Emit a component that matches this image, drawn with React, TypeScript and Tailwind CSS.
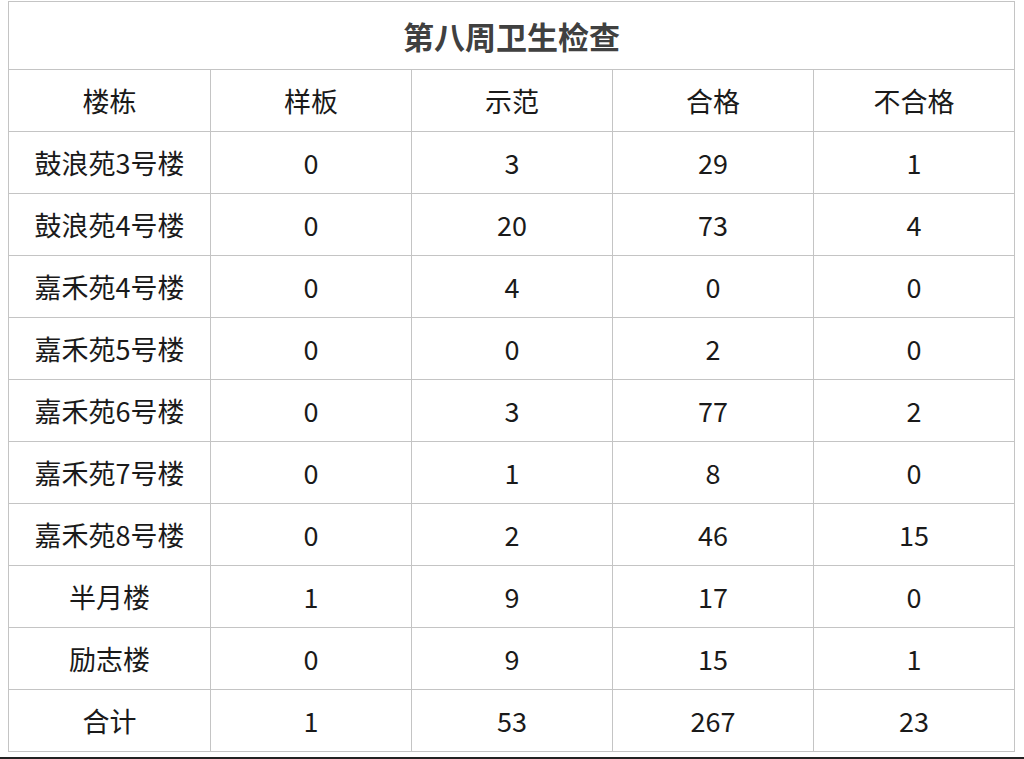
const rows: [string, number, number, number, number][] = [
  ["鼓浪苑3号楼", 0, 3, 29, 1],
  ["鼓浪苑4号楼", 0, 20, 73, 4],
  ["嘉禾苑4号楼", 0, 4, 0, 0],
  ["嘉禾苑5号楼", 0, 0, 2, 0],
  ["嘉禾苑6号楼", 0, 3, 77, 2],
  ["嘉禾苑7号楼", 0, 1, 8, 0],
  ["嘉禾苑8号楼", 0, 2, 46, 15],
  ["半月楼", 1, 9, 17, 0],
  ["励志楼", 0, 9, 15, 1],
  ["合计", 1, 53, 267, 23],
];

const headers = ["楼栋", "样板", "示范", "合格", "不合格"];

export default function App() {
  return (
    <div className="w-[1024px] h-[759px] bg-white flex flex-col overflow-hidden font-['Microsoft_YaHei','Noto_Sans_CJK_SC',sans-serif]">
      <div className="flex-1 pl-2 pt-px">
        <table className="border-collapse w-[1006px] table-fixed text-[#1a1a1a]">
          <colgroup>
            <col className="w-[202px]" />
            <col className="w-[201px]" />
            <col className="w-[201px]" />
            <col className="w-[201px]" />
            <col className="w-[201px]" />
          </colgroup>
          <tbody>
            <tr>
              <td
                colSpan={5}
                className="border border-[#c4c4c4] h-[68px] text-center text-[31px] font-bold text-[#404040] leading-none"
              >
                第八周卫生检查
              </td>
            </tr>
            <tr>
              {headers.map((h) => (
                <td key={h} className="border border-[#c4c4c4] h-[62px] text-center text-[27px] leading-none">
                  {h}
                </td>
              ))}
            </tr>
            {rows.map((r) => (
              <tr key={r[0]}>
                {r.map((c, i) => (
                  <td key={i} className="border border-[#c4c4c4] h-[62px] text-center text-[27px] leading-none">
                    {c}
                  </td>
                ))}
              </tr>
            ))}
          </tbody>
        </table>
      </div>
      <div className="h-[2px] bg-[#222]" />
    </div>
  );
}
